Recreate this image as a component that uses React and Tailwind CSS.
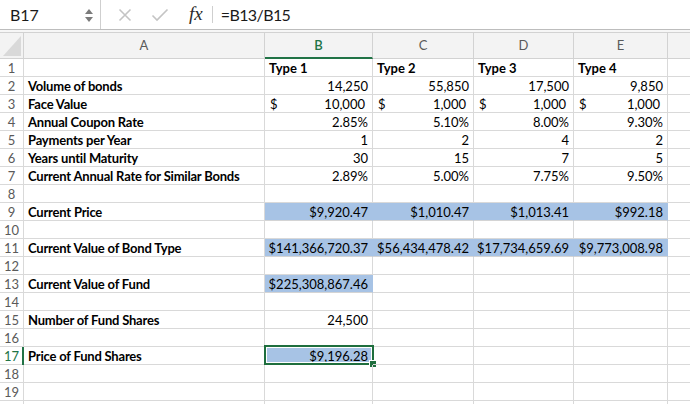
import React from 'react';

const COLS = ['A', 'B', 'C', 'D', 'E', 'F'];
const WIDTHS = ['w-[241px]', 'w-[108px]', 'w-[101px]', 'w-[100px]', 'w-[94px]', 'flex-1'];

// each row: [label, B, C, D, E], cell = string | {v, cur, fill, left}
const ROWS = [
  ['', { v: 'Type 1', left: true }, { v: 'Type 2', left: true }, { v: 'Type 3', left: true }, { v: 'Type 4', left: true }],
  ['Volume of bonds', '14,250', '55,850', '17,500', '9,850'],
  ['Face Value', { v: '10,000', cur: true }, { v: '1,000', cur: true }, { v: '1,000', cur: true }, { v: '1,000', cur: true }],
  ['Annual Coupon Rate', '2.85%', '5.10%', '8.00%', '9.30%'],
  ['Payments per Year', '1', '2', '4', '2'],
  ['Years until Maturity', '30', '15', '7', '5'],
  ['Current Annual Rate for Similar Bonds', '2.89%', '5.00%', '7.75%', '9.50%'],
  [''],
  ['Current Price', { v: '$9,920.47', fill: true }, { v: '$1,010.47', fill: true }, { v: '$1,013.41', fill: true }, { v: '$992.18', fill: true }],
  [''],
  ['Current Value of Bond Type', { v: '$141,366,720.37', fill: true }, { v: '$56,434,478.42', fill: true }, { v: '$17,734,659.69', fill: true }, { v: '$9,773,008.98', fill: true }],
  [''],
  ['Current Value of Fund', { v: '$225,308,867.46', fill: true }],
  [''],
  ['Number of Fund Shares', '24,500'],
  [''],
  ['Price of Fund Shares', { v: '$9,196.28', fill: true, selected: true }],
  [''],
  [''],
  [''],
];

function Cell({ cell, width, bold, last }) {
  const c = typeof cell === 'string' ? { v: cell } : cell || { v: '' };
  return (
    <div
      className={`relative h-[18px] shrink-0 ${width} border-b border-r ${
        c.fill ? 'bg-[#a7c3e5] border-r-[#a7c3e5] border-b-[#d4d4d4]' : 'border-[#d9d9d9]'
      } flex items-center px-[4px] pt-[2px] ${c.left || bold ? 'justify-start' : 'justify-end'} ${
        bold ? 'font-bold tracking-[-0.2px]' : c.left ? 'font-bold' : ''
      } ${last ? 'border-r-0' : ''}`}
    >
      {c.cur ? (
        <div className="flex w-full justify-between pr-[3px] pl-[1px]">
          <span>$</span>
          <span>{c.v}</span>
        </div>
      ) : (
        <span className="whitespace-nowrap">{c.v}</span>
      )}
      {c.selected && (
        <div className="pointer-events-none absolute -left-[1px] -top-[2px] -right-[2px] -bottom-[1px] border-2 border-[#1e6e3d] shadow-[inset_0_0_0_1px_#ffffff]">
          <div className="absolute -bottom-[4px] -right-[4px] h-[6px] w-[6px] bg-[#1e6e3d] outline outline-1 outline-white" />
        </div>
      )}
    </div>
  );
}

function FormulaBar() {
  return (
    <div className="flex h-[29px] items-center bg-white text-[16px] text-[#1a1a1a]">
      <div className="w-[80px] pl-[10px]">B17</div>
      <svg width="10" height="16" viewBox="0 0 10 16" className="ml-[4px]">
        <path d="M5 2 L9 7 L1 7 Z" fill="#7b7b7b" />
        <path d="M1 10 L9 10 L5 15 Z" fill="#7b7b7b" />
      </svg>
      <div className="ml-[6px] h-[29px] w-[1px] bg-[#cfcfcf]" />
      <svg width="14" height="14" viewBox="0 0 14 14" className="ml-[17px]">
        <path d="M1.5 1.5 L12.5 12.5 M12.5 1.5 L1.5 12.5" stroke="#c4c4c4" strokeWidth="1.6" />
      </svg>
      <svg width="18" height="14" viewBox="0 0 18 14" className="ml-[19px]">
        <path d="M1.5 7.5 L6 12 L16.5 1.5" stroke="#c4c4c4" strokeWidth="1.6" fill="none" />
      </svg>
      <span className="ml-[20px] font-['Liberation_Serif'] text-[19px] italic text-[#2b2b2b]">fx</span>
      <div className="ml-[9px] h-[17px] w-[1px] bg-[#cfcfcf]" />
      <span className="ml-[8px] tracking-[-0.6px]">=B13/B15</span>
    </div>
  );
}

export default function App() {
  return (
    <div className="h-[404px] w-[690px] overflow-hidden bg-white font-['Lato',sans-serif] text-[13px] text-black">
      <FormulaBar />
      <div className="h-[1px] bg-[#bdbdbd]" />
      <div className="h-[2px] bg-[#f6f6f6]" />
      <div className="h-[1px] bg-[#d2d2d2]" />

      {/* column header */}
      <div className="flex h-[26px] bg-[#f3f3f3] text-[#5a5a5a]">
        <div className="relative w-[24px] shrink-0 border-b border-r border-[#d2d2d2]">
          <svg width="18" height="20" viewBox="0 0 18 20" className="absolute bottom-[2px] right-[2px]">
            <path d="M18 0 L18 20 L0 20 Z" fill="#d9d9d9" />
          </svg>
        </div>
        {COLS.map((col, i) => (
          <div
            key={col}
            className={`flex shrink-0 items-center justify-center ${WIDTHS[i]} border-r ${
              col === 'B'
                ? 'border-b-2 border-b-[#217346] border-r-[#d2d2d2] pt-[1px] font-semibold text-[#217346]'
                : 'border-b border-[#d2d2d2]'
            } ${i === 5 ? 'border-r-0' : ''}`}
          >
            {col === 'F' ? '' : col}
          </div>
        ))}
      </div>

      {ROWS.map((row, r) => (
        <div key={r} className="flex">
          <div
            className={`relative flex h-[18px] w-[24px] shrink-0 items-center justify-center border-b border-r border-[#d9d9d9] pt-[2px] ${
              r === 16 ? 'text-[#217346]' : 'text-[#5a5a5a]'
            }`}
          >
            {r < 19 ? r + 1 : ''}
            {r === 16 && <div className="absolute -right-[1px] top-0 h-[18px] w-[2px] bg-[#217346]" />}
          </div>
          <Cell cell={row[0]} width={WIDTHS[0]} bold />
          {[1, 2, 3, 4].map((i) => (
            <Cell key={i} cell={row[i]} width={WIDTHS[i]} />
          ))}
          <Cell cell="" width={WIDTHS[5]} last />
        </div>
      ))}
    </div>
  );
}
